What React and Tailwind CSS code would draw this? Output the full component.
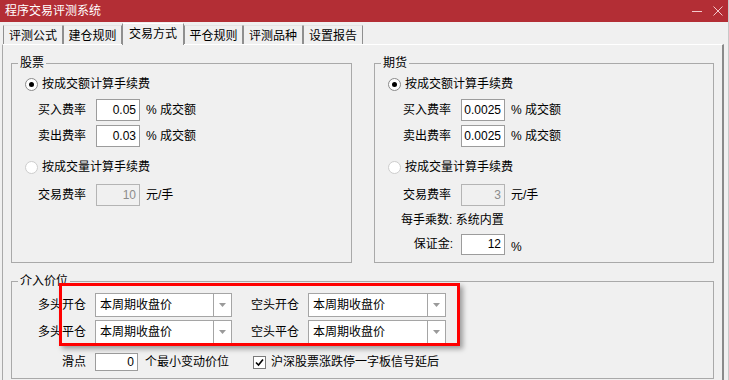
const font = "font-['Liberation_Sans','Noto_Sans_CJK_SC',sans-serif]";

const tabs = [
  { label: "评测公式", w: "w-[60px]" },
  { label: "建仓规则", w: "w-[59px]" },
  { label: "交易方式", w: "w-[62px]", active: true },
  { label: "平仓规则", w: "w-[59px]" },
  { label: "评测品种", w: "w-[60px]" },
  { label: "设置报告", w: "w-[60px]" },
];

function Radio({ checked }) {
  return (
    <div
      className={
        "flex h-[13px] w-[13px] items-center justify-center rounded-full border bg-white " +
        (checked ? "border-[#8a8a8a]" : "border-[#cdcdcd]")
      }
    >
      {checked && <div className="h-[5px] w-[5px] rounded-full bg-black" />}
    </div>
  );
}

function Field({ value, disabled, h = "h-[22px]", w = "w-[44px]" }) {
  return (
    <div
      className={
        "flex items-center justify-end border pr-[3px] " +
        h +
        " " +
        w +
        (disabled
          ? " border-[#b4b4b4] bg-[#f0f0f0] text-[#8c8c8c]"
          : " border-[#9c9c9c] bg-white text-black")
      }
    >
      {value}
    </div>
  );
}

function Group({ title, className, children }) {
  return (
    <div className={"relative border border-[#a9a9a9] " + className}>
      <span className="absolute -top-[9px] left-[6px] bg-[#f0f0f0] px-[2px] leading-[16px]">
        {title}
      </span>
      {children}
    </div>
  );
}

function FeeRows({ buy, sell, qty, pad }) {
  return (
    <>
      <div className="mt-[11px] flex h-[18px] items-center gap-[4px] pl-[13px]">
        <Radio checked />
        <span>按成交额计算手续费</span>
      </div>
      <div className={"mt-[6px] flex items-center " + pad}>
        <span className="w-[48px]">买入费率</span>
        <div className="ml-[10px]">
          <Field value={buy} />
        </div>
        <span className="ml-[6px]">% 成交额</span>
      </div>
      <div className={"mt-[4px] flex items-center " + pad}>
        <span className="w-[48px]">卖出费率</span>
        <div className="ml-[10px]">
          <Field value={sell} />
        </div>
        <span className="ml-[6px]">% 成交额</span>
      </div>
      <div className="mt-[11px] flex h-[18px] items-center gap-[4px] pl-[13px]">
        <Radio />
        <span>按成交量计算手续费</span>
      </div>
      <div className={"mt-[8px] flex items-center " + pad}>
        <span className="w-[48px]">交易费率</span>
        <div className="ml-[10px]">
          <Field value={qty} disabled />
        </div>
        <span className="ml-[6px]">元/手</span>
      </div>
    </>
  );
}

function Combo({ w }) {
  return (
    <div className={"flex h-[24px] border border-[#a5a5a5] bg-white " + w}>
      <span className="flex flex-1 items-center pl-[4px]">本周期收盘价</span>
      <div className="flex w-[18px] items-center justify-center border-l border-[#a5a5a5]">
        <svg width="7" height="4" viewBox="0 0 7 4">
          <path d="M0 0 H7 L3.5 4 Z" fill="#9a9a9a" />
        </svg>
      </div>
    </div>
  );
}

export default function App() {
  return (
    <div
      className={
        "h-[380px] w-[729px] overflow-hidden border-r border-[#c8c8c8] bg-[#f0f0f0] text-[12px] leading-[16px] text-black " +
        font
      }
    >
      <div className="flex h-[22px] items-center justify-between bg-[#b32e35] pl-[5px] pr-[5px] text-white">
        <span className="text-[12px]">程序交易评测系统</span>
        <div className="flex items-center gap-[11px]">
          <div className="h-px w-[10px] bg-[#f3c9cb]" />
          <svg width="10" height="10" viewBox="0 0 10 10">
            <path d="M0.5 0.5 L9.5 9.5 M9.5 0.5 L0.5 9.5" stroke="#f3c9cb" strokeWidth="1" />
          </svg>
        </div>
      </div>

      <div className="flex h-[22px] items-end pl-[3px]">
        {tabs.map((t) =>
          t.active ? (
            <div
              key={t.label}
              className={
                "relative z-10 -mb-px flex h-[22px] items-center justify-center border-x border-t border-x-[#8f8f8f] border-t-white bg-[#f0f0f0] pb-[2px] " +
                t.w
              }
            >
              {t.label}
            </div>
          ) : (
            <div
              key={t.label}
              className={
                "flex h-[19px] items-center justify-center border-x border-t border-x-[#8f8f8f] border-t-[#e4e4e4] bg-[#f0f0f0] pt-[1px] " +
                t.w
              }
            >
              {t.label}
            </div>
          )
        )}
      </div>

      <div className="ml-[2px] h-[340px] w-[722px] border-l border-r-2 border-t border-l-[#a9a9a9] border-r-[#8a8a8a] border-t-white pl-[8px] pt-[18px]">
        <div className="flex gap-[22px]">
          <Group title="股票" className="h-[200px] w-[341px]">
            <FeeRows buy="0.05" sell="0.03" qty="10" pad="pl-[26px]" />
          </Group>
          <Group title="期货" className="h-[200px] w-[340px]">
            <FeeRows buy="0.0025" sell="0.0025" qty="3" pad="pl-[28px]" />
            <div className="mt-[5px] flex h-[18px] items-center pl-[26px]">
              每手乘数: 系统内置
            </div>
            <div className="mt-[4px] flex items-center">
              <span className="w-[78px] text-right">保证金:</span>
              <div className="ml-[8px]">
                <Field value="12" h="h-[21px]" />
              </div>
              <span className="ml-[6px] mt-[6px]">%</span>
            </div>
          </Group>
        </div>

        <Group title="介入价位" className="mt-[18px] h-[98px] w-[703px]">
          <div className="mt-[11px] flex items-center pl-[26px]">
            <span className="w-[48px] text-right">多头开仓</span>
            <div className="ml-[9px]">
              <Combo w="w-[137px]" />
            </div>
            <span className="ml-[19px] w-[48px] text-right">空头开仓</span>
            <div className="ml-[9px]">
              <Combo w="w-[138px]" />
            </div>
          </div>
          <div className="mt-[3px] flex items-center pl-[26px]">
            <span className="w-[48px] text-right">多头平仓</span>
            <div className="ml-[9px]">
              <Combo w="w-[137px]" />
            </div>
            <span className="ml-[19px] w-[48px] text-right">空头平仓</span>
            <div className="ml-[9px]">
              <Combo w="w-[138px]" />
            </div>
          </div>
          <div className="mt-[9px] flex items-center pl-[26px]">
            <div className="flex w-[215px] items-center">
              <span className="w-[48px] text-right">滑点</span>
              <div className="ml-[9px]">
                <Field value="0" h="h-[18px]" w="w-[43px]" />
              </div>
              <span className="ml-[7px]">个最小变动价位</span>
            </div>
            <div className="flex h-[13px] w-[13px] items-center justify-center border border-[#7a7a7a] bg-white">
              <svg width="9" height="9" viewBox="0 0 9 9">
                <path d="M1 4.5 L3.5 7 L8 1.5" stroke="#000" strokeWidth="1.6" fill="none" />
              </svg>
            </div>
            <span className="ml-[5px]">沪深股票涨跌停一字板信号延后</span>
          </div>

          <div className="absolute left-[47px] top-[1px] h-[63px] w-[401px] border-[3px] border-[#ff0000] shadow-[3px_3px_5px_rgba(0,0,0,0.35)]" />
        </Group>
      </div>
    </div>
  );
}
